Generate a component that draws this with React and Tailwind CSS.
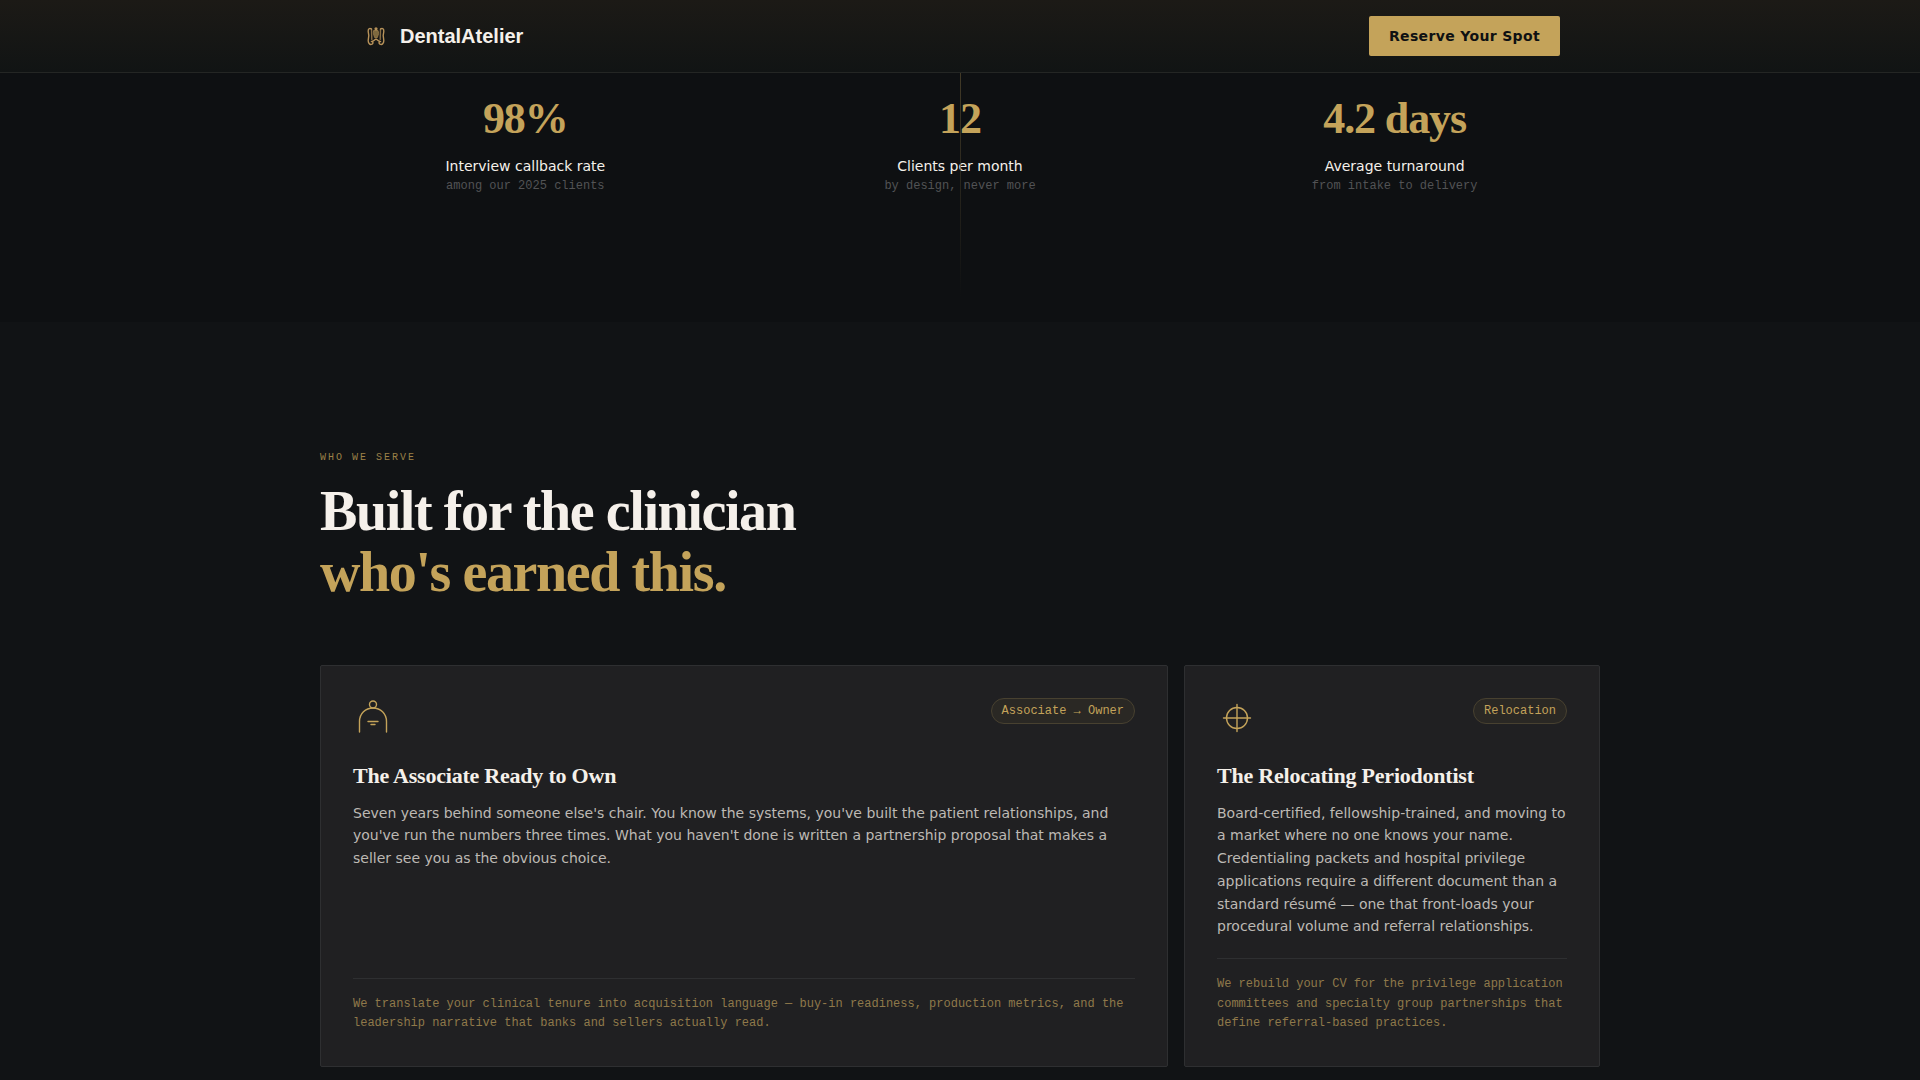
const stats = [
  { value: '98%', label: 'Interview callback rate', note: 'among our 2025 clients' },
  { value: '12', label: 'Clients per month', note: 'by design, never more' },
  { value: '4.2 days', label: 'Average turnaround', note: 'from intake to delivery' },
]

const audiences = [
  {
    title: 'The Associate Ready to Own',
    tag: 'Associate → Owner',
    icon: AssociateIcon,
    span: 'lg:col-span-2',
    desc: "Seven years behind someone else's chair. You know the systems, you've built the patient relationships, and you've run the numbers three times. What you haven't done is written a partnership proposal that makes a seller see you as the obvious choice.",
    note: 'We translate your clinical tenure into acquisition language — buy-in readiness, production metrics, and the leadership narrative that banks and sellers actually read.',
  },
  {
    title: 'The Relocating Periodontist',
    tag: 'Relocation',
    icon: CompassIcon,
    span: 'lg:col-span-1',
    desc: 'Board-certified, fellowship-trained, and moving to a market where no one knows your name. Credentialing packets and hospital privilege applications require a different document than a standard résumé — one that front-loads your procedural volume and referral relationships.',
    note: 'We rebuild your CV for the privilege application committees and specialty group partnerships that define referral-based practices.',
  },
]

function LogoMark() {
  return (
    <svg width="32" height="32" viewBox="0 0 32 32" fill="none" stroke="#b8935a" strokeWidth="1.4" strokeLinecap="round" strokeLinejoin="round" aria-hidden="true">
      <path d="M11.5 9C9.5 7.6 8 9 8.2 11.5L8.8 15.5L8.2 20.5C8.2 23 9.6 24.8 11.4 24.4C13 24 13.4 22.6 12.4 21.6" />
      <path d="M20.5 9C22.5 7.6 24 9 23.8 11.5L23.2 15.5L23.8 20.5C23.8 23 22.4 24.8 20.6 24.4C19 24 18.6 22.6 19.6 21.6" />
      <path d="M11.5 9L11.8 19.5M20.5 9L20.2 19.5" opacity="0.7" />
      <path d="M11.4 21.6C13.4 21.4 14.6 20.2 16 19C17.4 20.2 18.6 21.4 20.6 21.6" />
      <path d="M14 10.5H18L18.6 13.5L17.4 17.5H14.6L13.4 13.5Z" fill="#7d693f" stroke="#8d7345" strokeWidth="1" />
      <circle cx="16" cy="8.8" r="1.6" fill="#b8935a" stroke="none" />
    </svg>
  )
}

function AssociateIcon() {
  return (
    <svg width="40" height="40" viewBox="0 0 40 40" fill="none" stroke="#c4a35a" strokeWidth="1.4" strokeLinecap="round" aria-hidden="true">
      <path d="M6.5 34V23.5C6.5 15.5 12.5 10 20 10C27.5 10 33.5 15.5 33.5 23.5V34" />
      <circle cx="20" cy="6.5" r="3.5" />
      <path d="M15 23.5H25M18 26.5H22" />
    </svg>
  )
}

function CompassIcon() {
  return (
    <svg width="40" height="40" viewBox="0 0 40 40" fill="none" stroke="#c4a35a" strokeWidth="1.4" strokeLinecap="round" aria-hidden="true">
      <circle cx="20" cy="20" r="10.5" />
      <path d="M20 6.5V33.5M6.5 20H33.5" />
    </svg>
  )
}

function Header() {
  return (
    <header className="sticky top-0 z-10 border-b border-[#242624] bg-linear-to-b from-[#1c1a16] to-[#111414]">
      <div className="mx-auto flex h-18 max-w-7xl items-center justify-between px-10">
        <a href="#" className="flex items-center gap-2 font-['Liberation_Sans',Arial,sans-serif] text-xl font-bold text-[#f5f0ea]">
          <LogoMark />
          DentalAtelier
        </a>
        <button type="button" className="h-10 rounded-xs bg-[#c4a35a] px-5 text-sm font-bold tracking-wide text-[#0e1012]">
          Reserve Your Spot
        </button>
      </div>
    </header>
  )
}

function Stats() {
  return (
    <section className="relative bg-[#0e1012] pt-5 pb-[126px]">
      <div className="absolute top-0 left-1/2 h-56 w-px bg-linear-to-b from-[#423a27] to-transparent" />
      <div className="mx-auto grid max-w-7xl grid-cols-3 gap-6 text-center">
        {stats.map(s => (
          <div key={s.label}>
            <p className="mb-[11px] font-['Liberation_Serif',serif] text-[44px] leading-[52px] font-bold tracking-tight text-[#c4a35a]">{s.value}</p>
            <p className="text-sm text-[#f5f0ea]">{s.label}</p>
            <p className="font-['Liberation_Mono',monospace] text-xs leading-5 text-[#525355]">{s.note}</p>
          </div>
        ))}
      </div>
    </section>
  )
}

function AudienceCard({ item }) {
  const Icon = item.icon
  return (
    <article className={`flex flex-col rounded-xs border border-[#2e2f31] bg-[#202022] p-8 ${item.span}`}>
      <div className="mb-6 flex items-start justify-between">
        <Icon />
        <span className="rounded-full border border-[#484130] bg-[#2a2824] px-2.5 py-1 font-['Liberation_Mono',monospace] text-xs text-[#c4a35a]">
          {item.tag}
        </span>
      </div>
      <h3 className="mb-3 font-['Liberation_Serif',serif] text-[22px] leading-tight font-bold tracking-[-0.01em] text-[#f5f0ea]">{item.title}</h3>
      <p className="mb-5 grow text-sm leading-relaxed text-[#bdb9b4]">{item.desc}</p>
      <p className="border-t border-[#2e2f31] pt-4 font-['Liberation_Mono',monospace] text-xs leading-relaxed text-[#8f794a]">{item.note}</p>
    </article>
  )
}

function WhoWeServe() {
  return (
    <section className="mx-auto max-w-7xl pt-32 pb-32">
      <p className="mb-4 font-['Liberation_Mono',monospace] text-[10px] leading-normal tracking-[0.2em] text-[#9c8148] uppercase">Who we serve</p>
      <h2 className="mb-[62px] font-['Liberation_Serif',serif] text-[56px] leading-[61px] font-bold tracking-tight text-[#f5f0ea]">
        Built for the clinician
        <span className="block text-[#c4a35a]">who's earned this.</span>
      </h2>
      <div className="grid grid-cols-1 gap-4 lg:grid-cols-3">
        {audiences.map(a => <AudienceCard key={a.title} item={a} />)}
      </div>
    </section>
  )
}

export default function App() {
  return (
    <div className="h-screen overflow-hidden bg-[#111315] font-['DejaVu_Sans',sans-serif]">
      <Header />
      <main>
        <Stats />
        <WhoWeServe />
      </main>
    </div>
  )
}
